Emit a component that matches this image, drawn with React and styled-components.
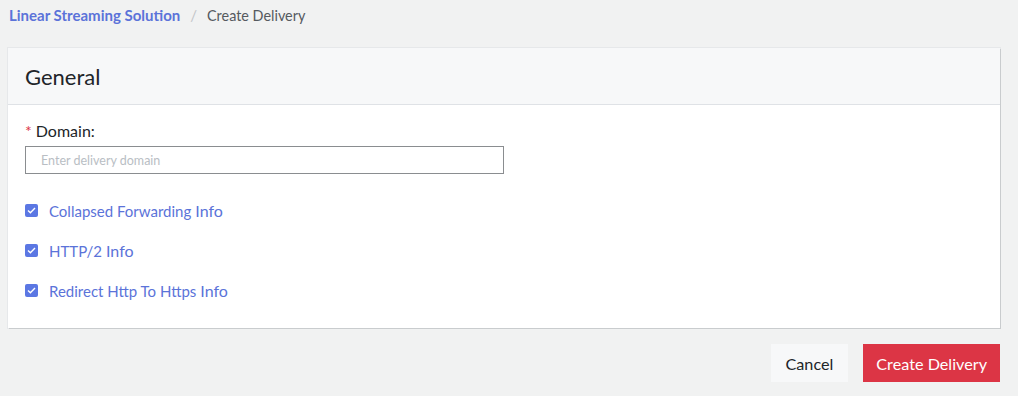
import styled, { createGlobalStyle } from "styled-components";

const GlobalStyle = createGlobalStyle`
  body {
    margin: 0;
    background: #f1f2f2;
    font-family: Lato, "Noto Sans", sans-serif;
  }
`;

const Page = styled.div`
  padding: 0 18px 0 8px;
`;

const Breadcrumb = styled.nav`
  display: flex;
  align-items: center;
  height: 30px;
  padding-left: 1px;
  font-size: 15px;
`;

const Crumb = styled.span`
  color: ${(p) => (p.$active ? "#5b73d9" : "#555a60")};
  font-weight: ${(p) => (p.$active ? 700 : 400)};
  font-size: ${(p) => (p.$active ? "15px" : "14.4px")};
`;

const Sep = styled.span`
  color: #c3c6c9;
  margin: 0 10px;
`;

const Card = styled.section`
  margin-top: 18px;
  background: #fff;
  box-shadow: 1px 1px 0 #c9ccce, 0 0 0 1px #e6e8ea;
`;

const CardHeader = styled.header`
  height: 56px;
  display: flex;
  align-items: center;
  padding: 0 17px;
  background: #f7f8f9;
  border-bottom: 1px solid #dfe2e6;
  font-size: 22px;
  color: #212529;
`;

const CardBody = styled.div`
  padding: 16px 17px 27px;
`;

const Label = styled.label`
  display: block;
  font-size: 16px;
  color: #212529;
  margin-bottom: 6px;
`;

const Req = styled.span`
  color: #dc3545;
  margin-right: 4px;
`;

const Input = styled.input`
  box-sizing: border-box;
  width: 479px;
  height: 28px;
  border: 1px solid #8a8d90;
  padding: 0 15px;
  font-family: inherit;
  font-size: 12.5px;
  outline: none;
  &::placeholder {
    color: #b9bec4;
  }
`;

const Checks = styled.div`
  display: flex;
  flex-direction: column;
  gap: 19px;
  margin-top: 26px;
`;

const CheckRow = styled.label`
  display: flex;
  align-items: center;
  gap: 11px;
  height: 21px;
  font-size: 15px;
  color: #5b73d9;
`;

const Box = styled.span`
  width: 13px;
  height: 13px;
  border-radius: 2px;
  background: #5b77e3;
  display: flex;
  align-items: center;
  justify-content: center;
`;

const Info = styled.span`
  font-size: 16px;
  margin-left: 4px;
`;

const Actions = styled.div`
  display: flex;
  justify-content: flex-end;
  gap: 15px;
  margin-top: 16px;
`;

const Button = styled.button`
  height: 38px;
  border: none;
  padding: 0 ${(p) => (p.$primary ? "13px" : "15px")};
  font-family: inherit;
  font-size: 16.2px;
  background: ${(p) => (p.$primary ? "#dc3545" : "#f7f8f9")};
  color: ${(p) => (p.$primary ? "#fff" : "#212529")};
`;

const Check = () => (
  <Box>
    <svg width="9" height="7" viewBox="0 0 9 7" fill="none">
      <path d="M1 3.5L3.4 5.8L8 1" stroke="#fff" strokeWidth="1.4" />
    </svg>
  </Box>
);

const options = ["Collapsed Forwarding", "HTTP/2", "Redirect Http To Https"];

export default function App() {
  return (
    <Page>
      <GlobalStyle />
      <Breadcrumb>
        <Crumb $active>Linear Streaming Solution</Crumb>
        <Sep>/</Sep>
        <Crumb>Create Delivery</Crumb>
      </Breadcrumb>
      <Card>
        <CardHeader>General</CardHeader>
        <CardBody>
          <Label>
            <Req>*</Req>Domain:
          </Label>
          <Input placeholder="Enter delivery domain" />
          <Checks>
            {options.map((o) => (
              <CheckRow key={o}>
                <Check />
                <span>
                  {o}
                  <Info>Info</Info>
                </span>
              </CheckRow>
            ))}
          </Checks>
        </CardBody>
      </Card>
      <Actions>
        <Button>Cancel</Button>
        <Button $primary>Create Delivery</Button>
      </Actions>
    </Page>
  );
}
